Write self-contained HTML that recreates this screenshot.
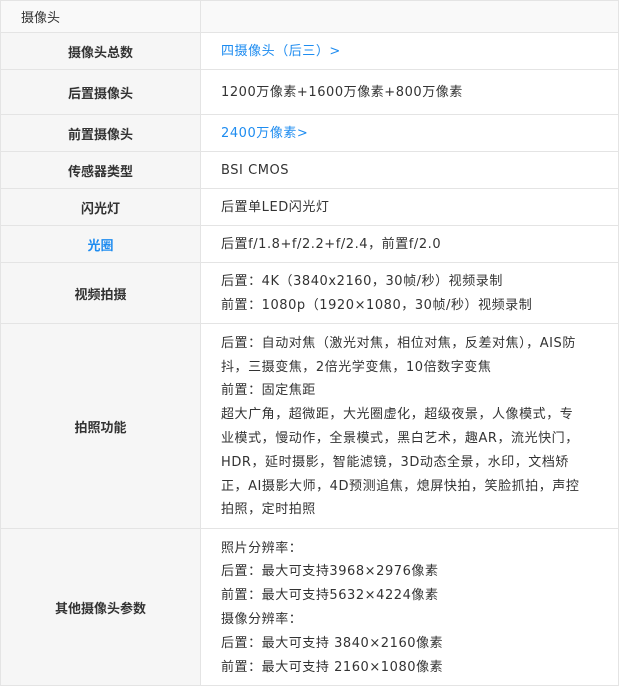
<!DOCTYPE html>
<html><head><meta charset="utf-8"><style>
*{margin:0;padding:0;box-sizing:border-box}
body{width:619px;height:688px;background:#fff;font-family:"DejaVu Sans","Noto Sans CJK SC",sans-serif;font-size:13px;color:#333;position:relative;overflow:hidden}
.r{position:absolute;left:0;width:619px;border:1px solid #e4e4e4;border-top:none;display:flex}
.l{width:200px;background:#f6f6f6;border-right:1px solid #e4e4e4;display:flex;align-items:center;justify-content:center;font-weight:bold;color:#333;font-family:"Liberation Sans","Noto Sans CJK SC",sans-serif}
.v{flex:1;display:flex;align-items:center;padding-left:20px;padding-top:2px;line-height:23.8px;white-space:nowrap;letter-spacing:0.55px}
.b{color:#1e8cf0}
</style></head><body>
<div class="r" style="top:0;height:33px;border-top:1px solid #e4e4e4;background:#f9f9f9"><div class="l" style="justify-content:flex-start;padding-left:20px;font-weight:normal;background:#f9f9f9">摄像头</div><div class="v"></div></div>
<div class="r" style="top:33px;height:37px"><div class="l">摄像头总数</div><div class="v b">四摄像头（后三）&gt;</div></div>
<div class="r" style="top:70px;height:45px"><div class="l">后置摄像头</div><div class="v">1200万像素+1600万像素+800万像素</div></div>
<div class="r" style="top:115px;height:37px"><div class="l">前置摄像头</div><div class="v b">2400万像素&gt;</div></div>
<div class="r" style="top:152px;height:37px"><div class="l">传感器类型</div><div class="v">BSI CMOS</div></div>
<div class="r" style="top:189px;height:37px"><div class="l">闪光灯</div><div class="v">后置单LED闪光灯</div></div>
<div class="r" style="top:226px;height:37px"><div class="l b">光圈</div><div class="v">后置f/1.8+f/2.2+f/2.4，前置f/2.0</div></div>
<div class="r" style="top:263px;height:61px"><div class="l">视频拍摄</div><div class="v"><div>后置：4K（3840x2160，30帧/秒）视频录制<br>前置：1080p（1920×1080，30帧/秒）视频录制</div></div></div>
<div class="r" style="top:324px;height:205px"><div class="l">拍照功能</div><div class="v"><div>后置：自动对焦（激光对焦，相位对焦，反差对焦），AIS防<br>抖，三摄变焦，2倍光学变焦，10倍数字变焦<br>前置：固定焦距<br>超大广角，超微距，大光圈虚化，超级夜景，人像模式，专<br>业模式，慢动作，全景模式，黑白艺术，趣AR，流光快门，<br>HDR，延时摄影，智能滤镜，3D动态全景，水印，文档矫<br>正，AI摄影大师，4D预测追焦，熄屏快拍，笑脸抓拍，声控<br>拍照，定时拍照</div></div></div>
<div class="r" style="top:529px;height:157px"><div class="l">其他摄像头参数</div><div class="v"><div>照片分辨率：<br>后置：最大可支持3968×2976像素<br>前置：最大可支持5632×4224像素<br>摄像分辨率：<br>后置：最大可支持 3840×2160像素<br>前置：最大可支持 2160×1080像素</div></div></div>
</body></html>
